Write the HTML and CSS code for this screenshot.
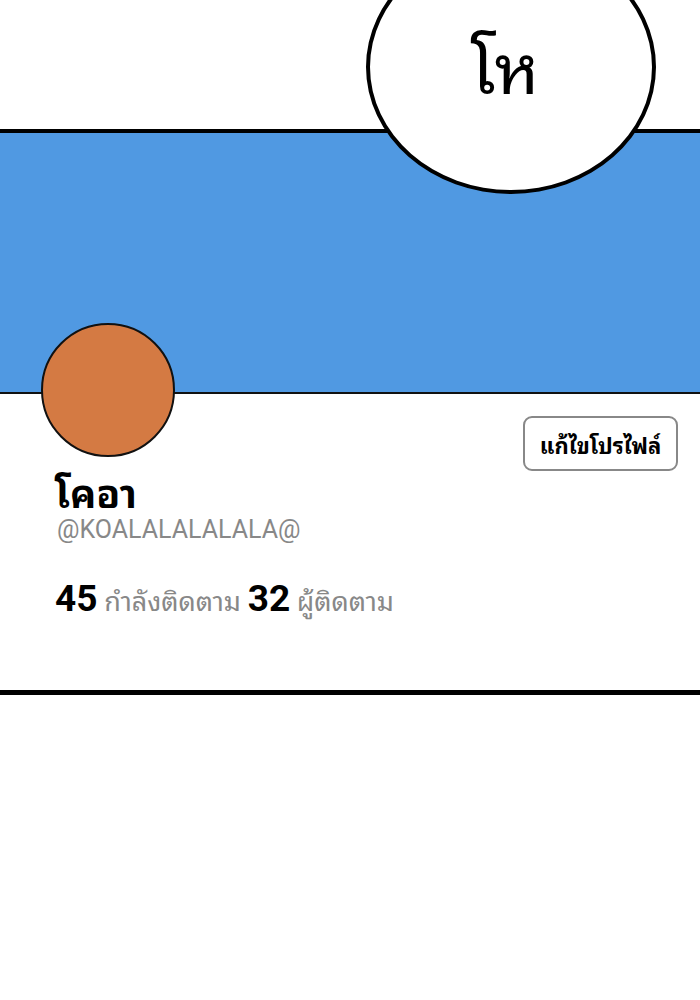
FILE: index.html
```html
<!DOCTYPE html>
<html lang="th">

<head>
    <meta charset="UTF-8">
    <meta name="viewport" content="width=device-width, initial-scale=1.0">
    <title>โปรไฟล์</title>
    <link rel="stylesheet" href="styles.css">
</head>

<body>

    <div class="page">
        <div class="top"></div>
        <div class="bubble">
            <span>โห</span>
        </div>
        <div class="banner"></div>

        <div class="profile">
            <div class="row">
                <div class="avatar"></div>
                <button class="edit-btn">แก้ไขโปรไฟล์</button>
            </div>
            <h1 class="name">โคอา</h1>
            <p class="handle">@KOALALALALALA@</p>
            <p class="stats">
                <b>45</b> <span>กำลังติดตาม</span> <b>32</b> <span>ผู้ติดตาม</span>
            </p>
        </div>
    </div>

</body>

</html>
```

FILE: styles.css
```css
body {
    margin: 0;
    background-color: #fff;
    font-family: "Roboto", "Noto Sans Thai Looped", "Loma", "Garuda", "Waree", "Norasi", "Noto Sans Thai", sans-serif;
}

.page {
    position: relative;
    width: 700px;
    overflow: hidden;
}

.top {
    height: 129px;
    border-bottom: 4px solid #000;
}

.banner {
    height: 259px;
    background-color: #5099e2;
    border-bottom: 2px solid #111;
}

/* speech bubble sits over the top edge and banner */
.bubble {
    position: absolute;
    left: 366px;
    top: -60px;
    width: 282px;
    height: 246px;
    border: 4px solid #000;
    border-radius: 50%;
    background-color: #fff;
    display: flex;
    justify-content: center;
    align-items: center;
}

.bubble span {
    font-size: 68px;
    margin-left: -12px;
    margin-bottom: 8px;
    color: #000;
}

.profile {
    display: flow-root;
    padding: 0 22px 0 41px;
    height: 296px;
    border-bottom: 5px solid #000;
}

.row {
    display: flex;
    justify-content: space-between;
    align-items: flex-start;
    margin-top: -71px;
}

.avatar {
    width: 130px;
    height: 130px;
    border: 2px solid #111;
    border-radius: 50%;
    background-color: #d47a43;
}

.edit-btn {
    margin-top: 93px;
    width: 155px;
    height: 55px;
    border: 2px solid #888;
    border-radius: 9px;
    background-color: #fff;
    font-family: inherit;
    font-size: 22px;
    font-weight: 700;
    color: #000;
}

.name {
    margin: 2px 0 0 14px;
    font-size: 39px;
    font-weight: 700;
    line-height: 44px;
}

.handle {
    margin: -2px 0 0 16px;
    font-size: 25px;
    line-height: 30px;
    color: #888;
}

.stats {
    margin: 32px 0 0 14px;
    font-size: 27px;
    color: #888;
}

.stats b {
    font-size: 37px;
    color: #000;
}
```
